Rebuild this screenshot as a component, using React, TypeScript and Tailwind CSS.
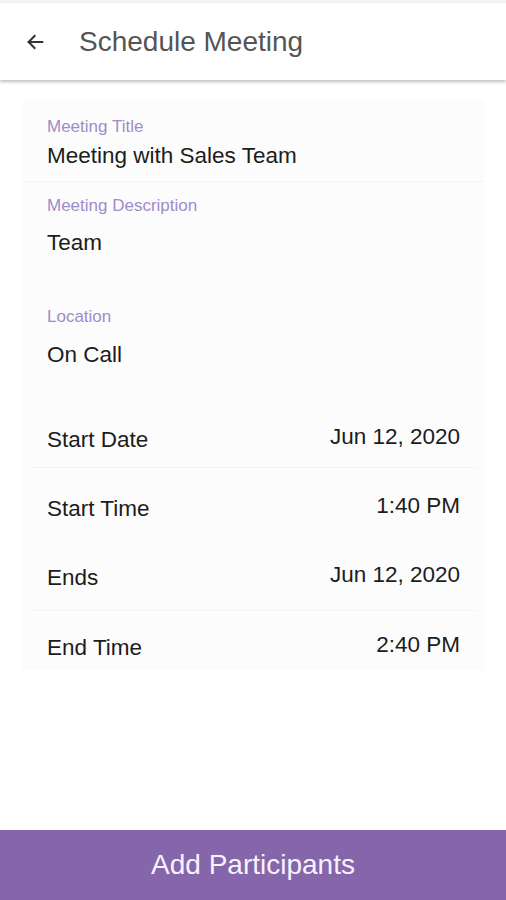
import React from "react";

function Row({ label, value, className }: { label: string; value: string; className: string }) {
  return (
    <div className={`flex items-start justify-between pl-[25px] pr-[24px] ${className}`}>
      <span className="text-[22.5px] leading-[26px] text-[#1c1c1c]">{label}</span>
      <span className="-mt-[3px] text-[22.5px] leading-[26px] text-[#1c1c1c]">{value}</span>
    </div>
  );
}

export default function App() {
  return (
    <div className="relative flex h-[900px] w-[506px] flex-col overflow-hidden bg-white font-['Liberation_Sans',Arial,sans-serif]">
      <div className="h-[3px] bg-[#f4f4f4]" />
      <header className="relative z-10 flex h-[77px] items-center bg-white shadow-[0_2px_3px_rgba(0,0,0,0.25)]">
        <svg className="ml-[24px] mt-[1px]" width="22" height="22" viewBox="0 0 24 24" fill="none">
          <path d="M20 12H5M11.5 5.5L5 12l6.5 6.5" stroke="#333" strokeWidth="2.2" strokeLinecap="square" />
        </svg>
        <h1 className="ml-[33px] text-[28px] font-normal leading-[32px] text-[#555555]">Schedule Meeting</h1>
      </header>

      <div className="flex-1">
        <div className="mx-[22px] mt-[20px] h-[570px] bg-[#fcfcfc]">
          <div className="h-[82px] border-b border-[#f3f3f3] pl-[25px] pt-[17px]">
            <div className="text-[17px] leading-[20px] text-[#a08cc8]">Meeting Title</div>
            <div className="mt-[6px] text-[22.5px] leading-[26px] text-[#1c1c1c]">Meeting with Sales Team</div>
          </div>
          <div className="pl-[25px] pt-[14px]">
            <div className="text-[17px] leading-[20px] text-[#a08cc8]">Meeting Description</div>
            <div className="mt-[14px] text-[22.5px] leading-[26px] text-[#1c1c1c]">Team</div>
          </div>
          <div className="pl-[25px] pt-[51px]">
            <div className="text-[17px] leading-[20px] text-[#a08cc8]">Location</div>
            <div className="mt-[15px] text-[22.5px] leading-[26px] text-[#1c1c1c]">On Call</div>
          </div>
          <Row label="Start Date" value="Jun 12, 2020" className="mt-[59px]" />
          <div className="mx-[8px] mt-[14px] h-px bg-[#f3f3f3]" />
          <Row label="Start Time" value="1:40 PM" className="mt-[28px]" />
          <Row label="Ends" value="Jun 12, 2020" className="mt-[43px]" />
          <div className="mx-[8px] mt-[19px] h-px bg-[#f3f3f3]" />
          <Row label="End Time" value="2:40 PM" className="mt-[24px]" />
        </div>
      </div>

      <button className="flex h-[70px] w-full items-center justify-center bg-[#8566ab] text-[28px] leading-[32px] text-[#f7f2fb]">
        Add Participants
      </button>
    </div>
  );
}
